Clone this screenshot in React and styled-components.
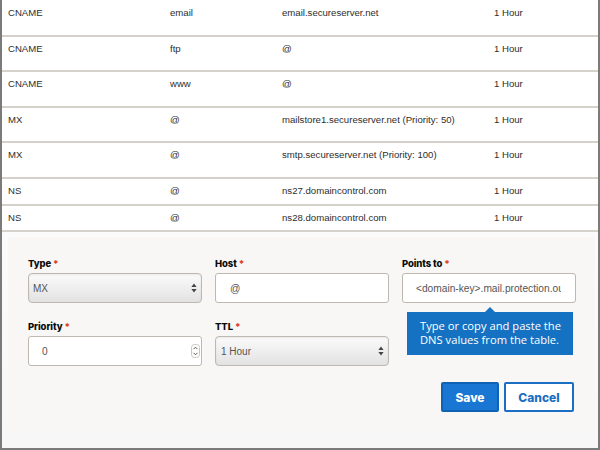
import React from "react";
import styled, { createGlobalStyle } from "styled-components";

const GlobalStyle = createGlobalStyle`
  html, body {
    margin: 0;
    padding: 0;
    background: #ffffff;
  }
  * {
    box-sizing: border-box;
  }
`;

const records = [
  { type: "CNAME", host: "email", points: "email.secureserver.net", ttl: "1 Hour", tall: true },
  { type: "CNAME", host: "ftp", points: "@", ttl: "1 Hour", tall: true },
  { type: "CNAME", host: "www", points: "@", ttl: "1 Hour", tall: true },
  { type: "MX", host: "@", points: "mailstore1.secureserver.net (Priority: 50)", ttl: "1 Hour", tall: true },
  { type: "MX", host: "@", points: "smtp.secureserver.net (Priority: 100)", ttl: "1 Hour", tall: true },
  { type: "NS", host: "@", points: "ns27.domaincontrol.com", ttl: "1 Hour", tall: false },
  { type: "NS", host: "@", points: "ns28.domaincontrol.com", ttl: "1 Hour", tall: false },
];

function SelectArrows() {
  return (
    <svg width="6" height="10" viewBox="0 0 6 10">
      <path d="M3 0.5 L5.6 4 L0.4 4 Z" fill="#444" />
      <path d="M3 9.5 L5.6 6 L0.4 6 Z" fill="#444" />
    </svg>
  );
}

function Spinner() {
  return (
    <svg width="9" height="14" viewBox="0 0 9 14">
      <rect x="0.5" y="0.5" width="8" height="13" rx="3" fill="#fff" stroke="#c9c6c0" />
      <path d="M2.5 5.2 L4.5 3.2 L6.5 5.2" fill="none" stroke="#555" strokeWidth="1" />
      <path d="M2.5 8.8 L4.5 10.8 L6.5 8.8" fill="none" stroke="#555" strokeWidth="1" />
    </svg>
  );
}

export default function App() {
  return (
    <>
      <GlobalStyle />
      <Frame>
        <Table>
          {records.map((r, i) => (
            <Row key={i} $tall={r.tall}>
              <Cell>{r.type}</Cell>
              <Cell>{r.host}</Cell>
              <Cell>{r.points}</Cell>
              <Cell>{r.ttl}</Cell>
            </Row>
          ))}
        </Table>

        <Panel>
          <FormGrid>
            <Field>
              <Label>
                Type<Req>*</Req>
              </Label>
              <SelectBox>
                <BoxText $inset={5}>MX</BoxText>
                <ArrowSlot>
                  <SelectArrows />
                </ArrowSlot>
              </SelectBox>
            </Field>

            <Field>
              <Label>
                Host<Req>*</Req>
              </Label>
              <TextBox readOnly value="@" $inset={15} />
            </Field>

            <Field>
              <Label>
                Points to<Req>*</Req>
              </Label>
              <TextBox readOnly value="<domain-key>.mail.protection.outlook.com" $inset={14} />
              <Tooltip>
                Type or copy and paste the
                <br />
                DNS values from the table.
              </Tooltip>
            </Field>

            <Field>
              <Label>
                Priority<Req>*</Req>
              </Label>
              <NumberWrap>
                <TextBox readOnly value="0" $inset={14} />
                <SpinSlot>
                  <Spinner />
                </SpinSlot>
              </NumberWrap>
            </Field>

            <Field>
              <Label>
                TTL<Req>*</Req>
              </Label>
              <SelectBox>
                <BoxText $inset={6}>1 Hour</BoxText>
                <ArrowSlot>
                  <SelectArrows />
                </ArrowSlot>
              </SelectBox>
            </Field>
          </FormGrid>

          <Actions>
            <Button $primary>Save</Button>
            <Button>Cancel</Button>
          </Actions>
        </Panel>
      </Frame>
    </>
  );
}

const Frame = styled.div`
  width: 600px;
  height: 450px;
  border: 2px solid #7a7a7a;
  border-top: none;
  background: linear-gradient(#ffffff, #f7f7f7);
  overflow: hidden;
  display: flex;
  flex-direction: column;
`;

const Table = styled.div`
  display: flex;
  flex-direction: column;
  padding-top: 1px;
  background: #ffffff;
  font-family: "Liberation Sans", Arial, sans-serif;
  font-size: 9.6px;
  color: #2e2e2e;
`;

const Row = styled.div`
  display: grid;
  grid-template-columns: 162px 112px 212px 1fr;
  height: ${(p) => (p.$tall ? "35.6px" : "26.7px")};
  padding: 6px 0 0 6px;
  border-bottom: 2px solid #d3d1ca;
  line-height: 12px;
`;

const Cell = styled.div`
  white-space: nowrap;
`;

const Panel = styled.div`
  margin: 5px 3px 0 6px;
  height: 196px;
  background: #f8f7f5;
  padding: 21px 21px 0 20px;
  display: flex;
  flex-direction: column;
`;

const FormGrid = styled.div`
  display: grid;
  grid-template-columns: repeat(3, 174px);
  column-gap: 13px;
  row-gap: 18px;
`;

const Field = styled.div`
  position: relative;
  display: flex;
  flex-direction: column;
  gap: 4px;
`;

const Label = styled.div`
  font-family: Inter, "Open Sans", sans-serif;
  font-weight: 800;
  font-size: 9.5px;
  line-height: 11px;
  color: #0a0a0a;
  letter-spacing: -0.1px;
`;

const Req = styled.span`
  color: #e0412c;
  margin-left: 2px;
`;

const SelectBox = styled.div`
  position: relative;
  height: 30px;
  border: 1px solid #bdb9b1;
  border-radius: 4px;
  background: linear-gradient(#fbfbfb, #ececec 60%, #e2e2e2);
  box-shadow: inset 0 1px 2px rgba(0, 0, 0, 0.08);
  display: flex;
  align-items: center;
`;

const BoxText = styled.span`
  padding-left: ${(p) => p.$inset - 1}px;
  font-family: "Liberation Sans", Arial, sans-serif;
  font-size: 10px;
  color: #555555;
`;

const ArrowSlot = styled.span`
  position: absolute;
  right: 4px;
  top: 9px;
  display: flex;
`;

const TextBox = styled.input`
  width: 100%;
  height: 30px;
  border: 1px solid #bdb9b1;
  border-radius: 3px;
  background: #ffffff;
  padding: 0 14px 0 ${(p) => p.$inset - 1}px;
  font-family: "Liberation Sans", Arial, sans-serif;
  font-size: 10.2px;
  color: #555555;
  outline: none;
`;

const NumberWrap = styled.div`
  position: relative;
`;

const SpinSlot = styled.span`
  position: absolute;
  right: 2px;
  top: 8px;
  display: flex;
`;

const Tooltip = styled.div`
  position: absolute;
  left: 5px;
  top: 54px;
  width: 166px;
  height: 43px;
  background: #1572c2;
  color: #ffffff;
  font-family: "Open Sans", sans-serif;
  font-size: 11.2px;
  line-height: 14px;
  padding: 7px 0 0 13px;
  white-space: nowrap;

  &::before {
    content: "";
    position: absolute;
    top: -5px;
    left: 78px;
    border-left: 5px solid transparent;
    border-right: 5px solid transparent;
    border-bottom: 5px solid #1572c2;
  }
`;

const Actions = styled.div`
  display: flex;
  justify-content: flex-end;
  gap: 5px;
  margin-top: 16px;
`;

const Button = styled.button`
  height: 30px;
  width: ${(p) => (p.$primary ? "58px" : "70px")};
  border-radius: 2px;
  border: 2px solid ${(p) => (p.$primary ? "#0f63b5" : "#1a6fc4")};
  background: ${(p) => (p.$primary ? "#1976d2" : "#ffffff")};
  color: ${(p) => (p.$primary ? "#ffffff" : "#1a6fc4")};
  font-family: Inter, "Open Sans", sans-serif;
  font-weight: 800;
  font-size: 12px;
  padding: 0;
  cursor: pointer;
`;
